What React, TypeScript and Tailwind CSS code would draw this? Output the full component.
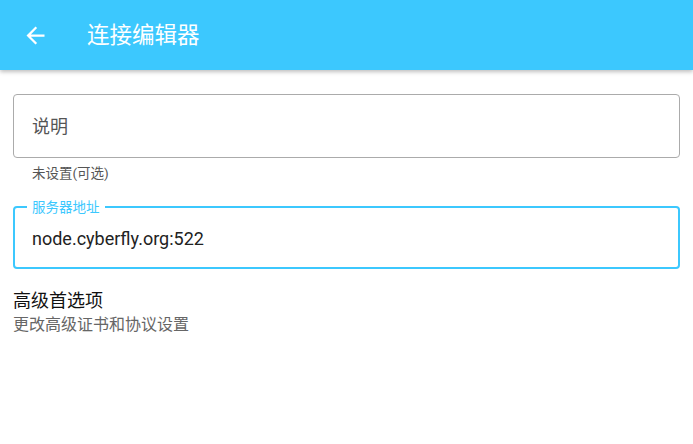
import React from "react";

export default function App() {
  const font = { fontFamily: '"Roboto", "Noto Sans CJK SC", sans-serif' };
  return (
    <div className="w-[693px] h-[444px] bg-white overflow-hidden" style={font}>
      <div className="h-[70px] bg-[#3cc8fe] flex items-center shadow-[0_2px_4px_rgba(0,0,0,0.25)] relative z-10">
        <div className="w-[72px] flex items-center pl-[22px]">
          <svg width="27" height="27" viewBox="0 0 24 24" fill="white">
            <path d="M20 11H7.83l5.59-5.59L12 4l-8 8 8 8 1.41-1.41L7.83 13H20v-2z" />
          </svg>
        </div>
        <div className="text-white text-[22.5px] ml-[15px] leading-none">连接编辑器</div>
      </div>
      <div className="px-[13px] pt-[24px]">
        <div className="h-[64px] border border-[#ababab] rounded-[4px] flex items-center px-[18px]">
          <span className="text-[18px] text-[#555]">说明</span>
        </div>
        <div className="text-[13.5px] text-[#555] pl-[19px] mt-[6px] leading-[18px]">未设置(可选)</div>
        <div className="relative mt-[24px] h-[63px] border-2 border-[#3cc8fe] rounded-[4px] flex items-center px-[17px]">
          <span className="absolute -top-[10px] left-[12px] bg-white px-[5px] text-[13.5px] text-[#3cc8fe] leading-[18px]">服务器地址</span>
          <span className="text-[18px] text-[#222] mt-[2px]">node.cyberfly.org:522</span>
        </div>
        <div className="mt-[20px]">
          <div className="text-[18px] text-[#111] leading-[24px]">高级首选项</div>
          <div className="text-[16px] text-[#666] leading-[22px] mt-[1px]">更改高级证书和协议设置</div>
        </div>
      </div>
    </div>
  );
}
